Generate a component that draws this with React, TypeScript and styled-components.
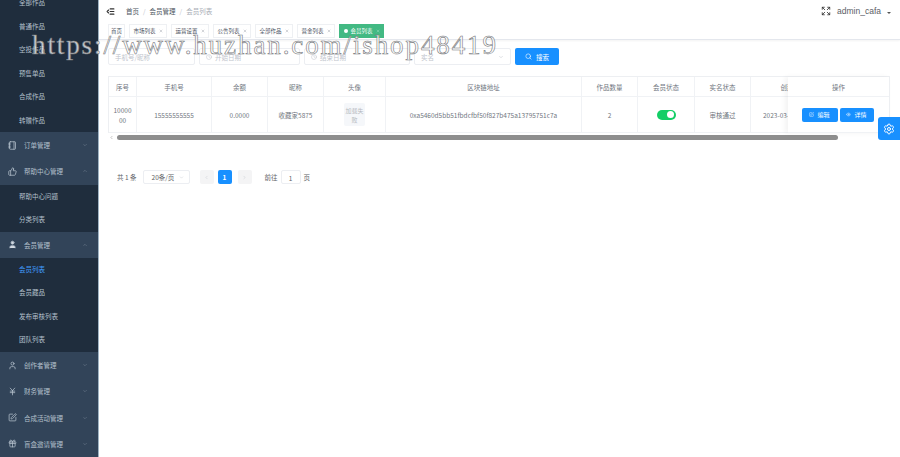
import React from "react";
import styled, { createGlobalStyle } from "styled-components";
import {
  ChevronDown,
  ChevronLeft,
  ChevronRight,
  ChevronUp,
  Clock,
  Eye,
  Expand,
  Gift,
  IndentDecrease,
  JapaneseYen,
  Notebook,
  Search,
  Settings,
  SquarePen,
  ThumbsUp,
  User,
  X,
} from "lucide-react";

const GlobalStyle = createGlobalStyle`
  html, body { margin: 0; padding: 0; height: 100%; background: #fff; overflow: hidden; }
  body { font-family: "Noto Sans CJK SC", "Liberation Sans", sans-serif; }
  #root { height: 100%; }
`;

const Page = styled.div`
  position: relative;
  display: flex;
  width: 900px;
  height: 457px;
  overflow: hidden;
`;

const Sidebar = styled.aside`
  width: 98px;
  flex: none;
  overflow: hidden;
  background: #1f2d3d;
  border-right: 1px solid #9fb4c4;
`;

const Menu = styled.nav`
  display: flex;
  flex-direction: column;
  margin-top: -9px;
`;

const SubItem = styled.div<{ $active?: boolean }>`
  height: 23.5px;
  line-height: 23.5px;
  padding-left: 19px;
  font-size: 6.5px;
  color: ${(p) => (p.$active ? "#409eff" : "#b4c0cc")};
  background: #1f2d3d;
`;

const GroupItem = styled.div`
  display: flex;
  align-items: center;
  height: 26.3px;
  padding-left: 8px;
  padding-right: 10px;
  font-size: 6.5px;
  color: #b4c0cc;
  background: #324459;
  svg.lead { width: 9px; height: 9px; margin-right: 7px; flex: none; }
  svg.arrow { width: 6px; height: 6px; margin-left: auto; opacity: 0.5; }
`;

const Main = styled.main`
  flex: 1;
  min-width: 0;
  display: flex;
  flex-direction: column;
`;

const TopBar = styled.header`
  display: flex;
  align-items: center;
  height: 24px;
  padding: 0 9px 2px 7px;
  flex: none;
  box-sizing: border-box;
  font-size: 6.5px;
`;

const Crumb = styled.span<{ $muted?: boolean }>`
  color: ${(p) => (p.$muted ? "#a8adb5" : "#4d5560")};
`;

const CrumbSep = styled.span`
  color: #c0c4cc;
  margin: 0 4px;
`;

const FoldIcon = styled(IndentDecrease)`
  width: 9px;
  height: 9px;
  color: #333;
  margin-right: 11px;
  stroke-width: 3;
`;

const UserBox = styled.div`
  margin-left: auto;
  display: flex;
  align-items: center;
  color: #5a5e66;
  font-size: 8.5px;
  font-family: "Liberation Sans", sans-serif;
  svg { width: 10px; height: 10px; color: #333; margin-right: 6px; }
`;

const Caret = styled.i`
  width: 0;
  height: 0;
  margin: 4px 0 0 6px;
  border-left: 2px solid transparent;
  border-right: 2px solid transparent;
  border-top: 2px solid #555;
`;

const TagsBar = styled.div`
  display: flex;
  align-items: center;
  gap: 4px;
  height: 16px;
  padding: 0 0 1px 9px;
  flex: none;
  box-sizing: border-box;
  border-bottom: 1px solid #e4e7ed;
  box-shadow: 0 1px 2px rgba(0, 0, 0, 0.05);
`;

const Tag = styled.span<{ $active?: boolean; $home?: boolean }>`
  display: inline-flex;
  align-items: center;
  gap: 3px;
  height: 14px;
  padding: 0 ${(p) => (p.$home ? "2px" : "3.5px")};
  box-sizing: border-box;
  font-size: 5.5px;
  color: ${(p) => (p.$active ? "#fff" : "#495060")};
  background: ${(p) => (p.$active ? "#42b983" : "#fff")};
  border: 1px solid ${(p) => (p.$active ? "#42b983" : "#eef0f3")};
  svg { width: 4px; height: 4px; opacity: 0.7; }
`;

const TagDot = styled.i`
  width: 4px;
  height: 4px;
  border-radius: 50%;
  background: #fff;
`;

const Content = styled.section`
  position: relative;
  flex: 1;
  padding: 8px 10px 0 9px;
`;

const Filters = styled.div`
  display: flex;
  align-items: center;
  gap: 4px;
  height: 17px;
`;

const Field = styled.div<{ $w: number }>`
  display: flex;
  align-items: center;
  width: ${(p) => p.$w}px;
  height: 17px;
  padding: 0 6px;
  box-sizing: border-box;
  border: 1px solid #eceef2;
  border-radius: 2px;
  font-size: 6.5px;
  color: #c0c4cc;
  gap: 3px;
  svg { width: 6px; height: 6px; color: #c0c4cc; flex: none; }
  svg.end { margin-left: auto; }
`;

const SearchButton = styled.button`
  display: flex;
  align-items: center;
  justify-content: center;
  gap: 4px;
  width: 44px;
  height: 17px;
  padding: 0;
  border: 0;
  border-radius: 2px;
  background: #1890ff;
  color: #fff;
  font: inherit;
  font-size: 6.5px;
  svg { width: 7px; height: 7px; }
`;

const TableWrap = styled.div`
  position: relative;
  margin-top: 11px;
  width: 782px;
`;

const Table = styled.div`
  display: grid;
  grid-template-columns: 28px 75px 56px 56px 62px 196px 56px 57px 56px 86px 54px;
  grid-template-rows: 20px 36px;
  border: solid #edeff2;
  border-width: 1px 0 0 1px;
  overflow: hidden;
  height: 57px;
  width: 782px;
  box-sizing: border-box;
`;

const Cell = styled.div<{ $start?: boolean }>`
  display: flex;
  align-items: center;
  justify-content: ${(p) => (p.$start ? "flex-start" : "center")};
  text-align: center;
  box-sizing: border-box;
  padding: 0 ${(p) => (p.$start ? "0 0 12px" : "4px")};
  font-size: 6.5px;
  line-height: 10px;
  color: #707680;
  border-right: 1px solid #f0f2f5;
  border-bottom: 1px solid #f0f2f5;
  word-break: break-all;
`;

const Avatar = styled.div`
  width: 21px;
  height: 23px;
  flex: none;
  display: flex;
  align-items: center;
  justify-content: center;
  background: #f5f7fa;
  color: #b5b9c0;
  font-size: 6px;
  line-height: 9px;
  border-radius: 2px;
`;

const Switch = styled.i`
  display: block;
  position: relative;
  width: 19px;
  height: 10px;
  border-radius: 5px;
  background: #13ce66;
  &::after {
    content: "";
    position: absolute;
    top: 1.5px;
    right: 1.5px;
    width: 7px;
    height: 7px;
    border-radius: 50%;
    background: #fff;
  }
`;

const FixedColumn = styled.div`
  position: absolute;
  top: 1px;
  right: 0;
  width: 102px;
  height: 56px;
  display: grid;
  grid-template-rows: 20px 36px;
  background: #fff;
  box-shadow: -3px 0 5px rgba(0, 0, 0, 0.05);
  border-right: 1px solid #edeff2;
  box-sizing: border-box;
`;

const ActionRow = styled.div`
  display: flex;
  align-items: center;
  justify-content: center;
  gap: 2px;
  padding-right: 2px;
  border-bottom: 1px solid #f0f2f5;
`;

const FixedHead = styled(ActionRow)`
  padding-right: 0;
  font-size: 6.5px;
  color: #707680;
`;

const ActionButton = styled.button<{ $w: number }>`
  display: flex;
  align-items: center;
  justify-content: center;
  gap: 3px;
  width: ${(p) => p.$w}px;
  height: 14px;
  padding: 0;
  border: 0;
  border-radius: 2px;
  background: #1890ff;
  color: #fff;
  font: inherit;
  font-size: 6px;
  svg { width: 5px; height: 5px; }
`;

const ScrollTrack = styled.div`
  display: flex;
  align-items: center;
  height: 6px;
  margin-top: 1px;
  color: #777;
  svg { width: 5px; height: 5px; margin-left: 1px; flex: none; }
`;

const ScrollThumb = styled.div`
  width: 721px;
  height: 5px;
  margin-left: 3px;
  border-radius: 3px;
  background: #8e8e8e;
`;

const Pagination = styled.div`
  display: flex;
  align-items: center;
  height: 14px;
  margin-top: 30px;
  padding-left: 9px;
  font-size: 6.5px;
  color: #606266;
`;

const PageSize = styled.div`
  display: flex;
  align-items: center;
  width: 47px;
  height: 14px;
  margin-left: 6px;
  padding: 0 5px 0 8px;
  box-sizing: border-box;
  border: 1px solid #eceef2;
  border-radius: 2px;
  svg { width: 5px; height: 5px; margin-left: auto; color: #c0c4cc; }
`;

const PageButton = styled.div<{ $active?: boolean; $gap: number }>`
  display: flex;
  align-items: center;
  justify-content: center;
  width: 14px;
  height: 14px;
  margin-left: ${(p) => p.$gap}px;
  border-radius: 2px;
  font-weight: 700;
  color: ${(p) => (p.$active ? "#fff" : "#c0c4cc")};
  background: ${(p) => (p.$active ? "#1890ff" : "#f4f4f5")};
  svg { width: 5px; height: 5px; }
`;

const JumpLabel = styled.span`
  margin-left: 13px;
`;

const JumpInput = styled.div`
  width: 20px;
  height: 14px;
  line-height: 14px;
  margin: 0 3px;
  text-align: center;
  box-sizing: border-box;
  border: 1px solid #eceef2;
  border-radius: 2px;
`;

const GearTab = styled.div`
  position: absolute;
  top: 117px;
  right: 0;
  width: 22px;
  height: 23px;
  display: flex;
  align-items: center;
  justify-content: center;
  border-radius: 3px 0 0 3px;
  background: #1890ff;
  color: #fff;
  svg { width: 12px; height: 12px; }
`;

const Watermark = styled.div`
  position: absolute;
  top: 26px;
  left: 32px;
  font-family: "Liberation Serif", serif;
  font-size: 27px;
  line-height: 38px;
  letter-spacing: 1.9px;
  white-space: nowrap;
  color: rgba(255, 255, 255, 0.75);
  -webkit-text-stroke: 0.6px #77797c;
  pointer-events: none;
`;

const works = ["全部作品", "普通作品", "空投作品", "预售单品", "合成作品", "转赠作品"];
const tags = ["市场列表", "运营设置", "公告列表", "全部作品", "营金列表"];
const heads = ["序号", "手机号", "余额", "昵称", "头像", "区块链地址", "作品数量", "会员状态", "实名状态", "创建时间", ""];

function App() {
  return (
    <Page>
      <GlobalStyle />
      <Sidebar>
        <Menu>
          {works.map((w) => (
            <SubItem key={w}>{w}</SubItem>
          ))}
          <GroupItem>
            <Notebook className="lead" />
            订单管理
            <ChevronDown className="arrow" />
          </GroupItem>
          <GroupItem>
            <ThumbsUp className="lead" />
            帮助中心管理
            <ChevronUp className="arrow" />
          </GroupItem>
          <SubItem>帮助中心问题</SubItem>
          <SubItem>分类列表</SubItem>
          <GroupItem>
            <User className="lead" fill="#d5dce4" />
            会员管理
            <ChevronUp className="arrow" />
          </GroupItem>
          <SubItem $active>会员列表</SubItem>
          <SubItem>会员藏品</SubItem>
          <SubItem>发布审核列表</SubItem>
          <SubItem>团队列表</SubItem>
          <GroupItem>
            <User className="lead" />
            创作者管理
            <ChevronDown className="arrow" />
          </GroupItem>
          <GroupItem>
            <JapaneseYen className="lead" />
            财务管理
            <ChevronDown className="arrow" />
          </GroupItem>
          <GroupItem>
            <SquarePen className="lead" />
            合成活动管理
            <ChevronDown className="arrow" />
          </GroupItem>
          <GroupItem>
            <Gift className="lead" />
            盲盒邀请管理
            <ChevronDown className="arrow" />
          </GroupItem>
        </Menu>
      </Sidebar>
      <Main>
        <TopBar>
          <FoldIcon />
          <Crumb>首页</Crumb>
          <CrumbSep>/</CrumbSep>
          <Crumb>会员管理</Crumb>
          <CrumbSep>/</CrumbSep>
          <Crumb $muted>会员列表</Crumb>
          <UserBox>
            <Expand />
            admin_cafa
            <Caret />
          </UserBox>
        </TopBar>
        <TagsBar>
          <Tag $home>首页</Tag>
          {tags.map((t) => (
            <Tag key={t}>
              {t}
              <X />
            </Tag>
          ))}
          <Tag $active>
            <TagDot />
            会员列表
            <X />
          </Tag>
        </TagsBar>
        <Content>
          <Filters>
            <Field $w={87}>手机号/昵称</Field>
            <Field $w={101}>
              <Clock />
              开始日期
            </Field>
            <Field $w={106}>
              <Clock />
              结束日期
            </Field>
            <Field $w={97}>
              实名
              <ChevronDown className="end" />
            </Field>
            <SearchButton>
              <Search />
              搜索
            </SearchButton>
          </Filters>
          <TableWrap>
            <Table>
              {heads.map((h, i) => (
                <Cell key={i}>{h}</Cell>
              ))}
              <Cell>1000000</Cell>
              <Cell>15555555555</Cell>
              <Cell>0.0000</Cell>
              <Cell>收藏家5875</Cell>
              <Cell>
                <Avatar>加载失败</Avatar>
              </Cell>
              <Cell>0xa5460d5bb51fbdcfbf50f827b475a13795751c7a</Cell>
              <Cell>2</Cell>
              <Cell>
                <Switch />
              </Cell>
              <Cell>审核通过</Cell>
              <Cell $start>2023-03-</Cell>
              <Cell />
            </Table>
            <FixedColumn>
              <FixedHead>操作</FixedHead>
              <ActionRow>
                <ActionButton $w={36}>
                  <SquarePen />
                  编辑
                </ActionButton>
                <ActionButton $w={34}>
                  <Eye />
                  详情
                </ActionButton>
              </ActionRow>
            </FixedColumn>
            <ScrollTrack>
              <ChevronLeft />
              <ScrollThumb />
            </ScrollTrack>
          </TableWrap>
          <Pagination>
            共 1 条
            <PageSize>
              20条/页
              <ChevronDown />
            </PageSize>
            <PageButton $gap={10}>
              <ChevronLeft />
            </PageButton>
            <PageButton $gap={4} $active>
              1
            </PageButton>
            <PageButton $gap={6}>
              <ChevronRight />
            </PageButton>
            <JumpLabel>前往</JumpLabel>
            <JumpInput>1</JumpInput>页
          </Pagination>
        </Content>
      </Main>
      <GearTab>
        <Settings />
      </GearTab>
      <Watermark>https://www.huzhan.com/ishop48419</Watermark>
    </Page>
  );
}

export default App;
